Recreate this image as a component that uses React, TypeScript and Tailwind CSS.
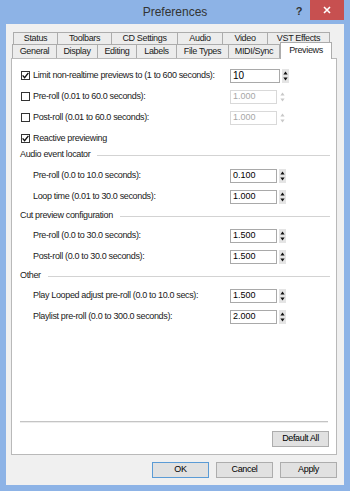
import React from 'react';

const font = "font-['Liberation_Sans',Arial,sans-serif]";

const Check = ({ checked }: { checked: boolean }) => (
  <span className="w-[9px] h-[9px] border border-[#333] bg-white flex items-center justify-center shrink-0">
    {checked && (
      <svg width="7" height="7" viewBox="0 0 7 7">
        <path d="M0.6 3.4 L2.6 5.6 L6.4 0.9" fill="none" stroke="#111" strokeWidth="1.4" />
      </svg>
    )}
  </span>
);

const Spinner = ({ disabled }: { disabled?: boolean }) => (
  <div className={disabled ? 'w-[7px] h-[14px] ml-[2px]' : 'w-[7px] h-[14px] ml-[2px] bg-[#e4e4e4]'}>
    <svg width="7" height="14" viewBox="0 0 7 14">
      <path d="M3.5 2.5 L5.6 5.5 L1.4 5.5 Z" fill={disabled ? '#c8c8c8' : '#111'} />
      <path d="M1.4 8.5 L5.6 8.5 L3.5 11.5 Z" fill={disabled ? '#c8c8c8' : '#111'} />
    </svg>
  </div>
);

const Field = ({ value, disabled, wide }: { value: string; disabled?: boolean; wide?: boolean }) => (
  <div className="flex items-center">
    <div
      className={`${wide ? 'w-[50px] text-[10px]' : 'w-[47px] text-[9px]'} h-[14px] border bg-white pl-[2px] flex items-center tracking-normal ${
        disabled ? 'border-[#d9d9d9] text-[#a6a6a6]' : 'border-[#a9a9a9] text-black'
      }`}
    >
      {value}
    </div>
    <Spinner disabled={disabled} />
  </div>
);

const CheckRow = ({ label, checked, value, disabled, wide }: { label: string; checked: boolean; value?: string; disabled?: boolean; wide?: boolean }) => (
  <div className="h-[21px] flex items-center">
    <div className="w-[218px] shrink-0 pl-[9px] flex items-center gap-[3px]">
      <Check checked={checked} />
      <span>{label}</span>
    </div>
    {value && <Field value={value} disabled={disabled} wide={wide} />}
  </div>
);

const Row = ({ label, value }: { label: string; value: string }) => (
  <div className="h-[21px] flex items-center">
    <div className="w-[218px] shrink-0 pl-[21px]">{label}</div>
    <Field value={value} />
  </div>
);

const Header = ({ title, h }: { title: string; h: string }) => (
  <div className={`${h} flex items-center pl-[8px] pr-[6px]`}>
    <span>{title}</span>
    <div className="flex-1 h-px bg-[#d3d3d3] ml-[7px]" />
  </div>
);

const Btn = ({ label, primary }: { label: string; primary?: boolean }) => (
  <button
    className={`w-[57px] h-[16px] bg-[#e1e1e1] border text-[9px] text-black flex items-center justify-center ${
      primary ? 'border-[#5b9bd5]' : 'border-[#adadad]'
    }`}
  >
    {label}
  </button>
);

const row1 = [
  ['Status', 'w-[45px]'],
  ['Toolbars', 'w-[55px]'],
  ['CD Settings', 'w-[67px]'],
  ['Audio', 'w-[46px]'],
  ['Video', 'w-[46px]'],
  ['VST Effects', 'w-[63px]'],
];

const row2 = [
  ['General', 'w-[45px]'],
  ['Display', 'w-[42px]'],
  ['Editing', 'w-[40px]'],
  ['Labels', 'w-[41px]'],
  ['File Types', 'w-[53px]'],
  ['MIDI/Sync', 'w-[52px]'],
];

export default function App() {
  return (
    <div className={`w-[350px] h-[491px] bg-[#8db3e6] flex flex-col ${font} text-[9px] tracking-[-0.35px] text-[#1a1a1a]`}>
      {/* Title bar */}
      <div className="relative h-[24px] shrink-0 flex items-center justify-center">
        <span className="text-[12px] tracking-normal text-[#333]">Preferences</span>
        <span className="absolute right-[48px] top-[3px] text-[11px] font-bold text-[#333]">?</span>
        <div className="absolute right-[6px] top-0 w-[34px] h-[20px] bg-[#c75050] flex items-center justify-center">
          <svg width="8" height="8" viewBox="0 0 8 8">
            <path d="M1 1 L7 7 M7 1 L1 7" stroke="#fff" strokeWidth="1.6" />
          </svg>
        </div>
      </div>

      {/* Client area */}
      <div className="flex-1 mx-[6px] mb-[6px] bg-[#f0f0f0] flex flex-col pl-[5px] pr-[7px] pt-[8px] pb-[7px]">
        {/* Tabs */}
        <div className="h-[12px] flex pl-[2px]">
          {row1.map(([t, w]) => (
            <div key={t} className={`${w} h-[12px] border border-b-0 border-[#acacac] -ml-px first:ml-0 bg-[#ececec] flex items-center justify-center`}>
              {t}
            </div>
          ))}
        </div>
        <div className="h-[14px] flex items-end pl-[1px]">
          {row2.map(([t, w]) => (
            <div key={t} className={`${w} h-[14px] border border-b-0 border-[#acacac] -ml-px first:ml-0 bg-[#ececec] flex items-center justify-center`}>
              {t}
            </div>
          ))}
          <div className="relative z-10 w-[52px] h-[17px] -mb-px border border-b-0 border-[#acacac] bg-white flex items-center justify-center pb-[1px]">
            Previews
          </div>
        </div>

        {/* Panel */}
        <div className="flex-1 bg-white border border-[#b9b9b9] flex flex-col pt-[6px] pb-[7px]">
          <CheckRow label="Limit non-realtime previews to (1 to 600 seconds):" checked value="10" wide />
          <CheckRow label="Pre-roll (0.01 to 60.0 seconds):" checked={false} value="1.000" disabled />
          <CheckRow label="Post-roll (0.01 to 60.0 seconds):" checked={false} value="1.000" disabled />
          <CheckRow label="Reactive previewing" checked />

          <Header title="Audio event locator" h="h-[14px] mt-[-1px] mb-[3px]" />
          <Row label="Pre-roll (0.0 to 10.0 seconds):" value="0.100" />
          <Row label="Loop time (0.01 to 30.0 seconds):" value="1.000" />

          <Header title="Cut preview configuration" h="h-[18px]" />
          <Row label="Pre-roll (0.0 to 30.0 seconds):" value="1.500" />
          <Row label="Post-roll (0.0 to 30.0 seconds):" value="1.500" />

          <Header title="Other" h="h-[18px]" />
          <Row label="Play Looped adjust pre-roll (0.0 to 10.0 secs):" value="1.500" />
          <Row label="Playlist pre-roll (0.0 to 300.0 seconds):" value="2.000" />

          <div className="flex-1" />
          <div className="mx-[8px] h-[2px] border-t border-[#c4c4c4] bg-[#ececec]" />
          <div className="flex justify-end pr-[7px] mt-[8px]">
            <Btn label="Default All" />
          </div>
        </div>

        {/* Dialog buttons */}
        <div className="flex justify-end gap-[7px] mt-[7px]">
          <Btn label="OK" primary />
          <Btn label="Cancel" />
          <Btn label="Apply" />
        </div>
      </div>
    </div>
  );
}
